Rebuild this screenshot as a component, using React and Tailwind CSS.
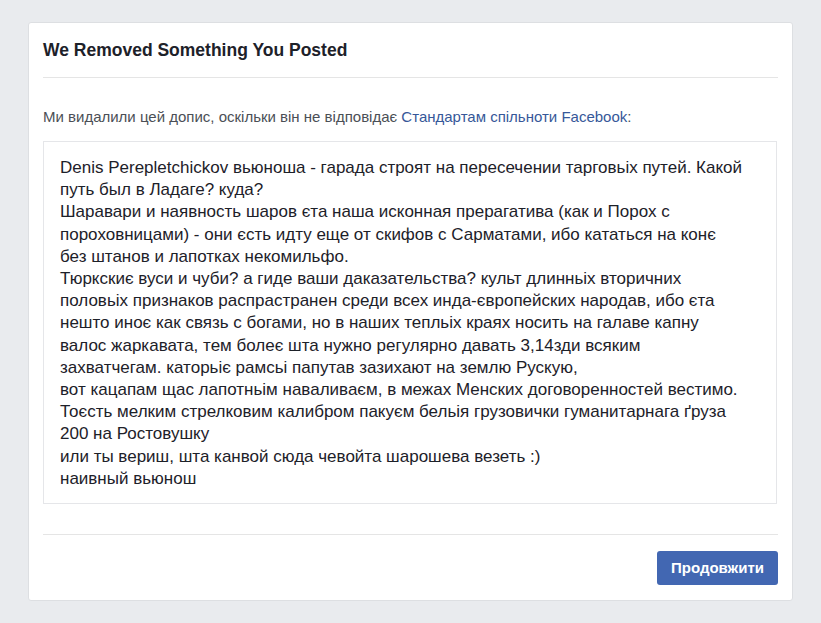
import React from "react";

const lines = [
  "Denis Perepletchickov вьюноша - гарада строят на пересечении тарговьіх путей. Какой",
  "путь был в Ладаге? куда?",
  "Шаравари и наявность шаров єта наша исконная прерагатива (как и Порох с",
  "пороховницами) - они єсть идту еще от скифов с Сарматами, ибо кататься на конє",
  "без штанов и лапотках некомильфо.",
  "Тюркскиє вуси и чуби? а гиде ваши даказательства? культ длинньіх вторичних",
  "половьіх признаков распрастранен среди всех инда-європейских народав, ибо єта",
  "нешто иноє как связь с богами, но в наших тепльіх краях носить на галаве капну",
  "валос жаркавата, тем болеє шта нужно регулярно давать 3,14зди всяким",
  "захватчегам. каторьіє рамсьі папутав зазихают на землю Рускую,",
  "вот кацапам щас лапотньім наваливаєм, в межах Менских договоренностей вестимо.",
  "Тоєсть мелким стрелковим калибром пакуєм бельія грузовички гуманитарнага ґруза",
  "200 на Ростовушку",
  "или ты вериш, шта канвой сюда чевойта шарошева везеть :)",
  "наивный вьюнош",
];

export default function App() {
  return (
    <div className="min-h-[623px] bg-[#e9ebee] pt-[22px] pl-[28px] pr-[28px] pb-[23px] font-['Liberation_Sans',Arial,sans-serif]">
      <div className="w-[765px] rounded-[3px] border border-[#dddfe2] bg-white px-[14px]">
        <div className="flex h-[55px] items-center border-b border-[#e5e5e5]">
          <h2 className="text-[17.5px] font-bold text-[#1d2129]">We Removed Something You Posted</h2>
        </div>
        <p className="pt-[30px] text-[15px] leading-[18px] text-[#4b4f56]">
          Ми видалили цей допис, оскільки він не відповідає{" "}
          <span className="text-[#365899]">Стандартам спільноти Facebook</span>:
        </p>
        <div className="mt-[15px] mb-[30px] mr-px border border-[#e5e6e9] px-[16px] pt-[15px] pb-[13px] text-[17px] leading-[22.2px] text-[#1d2129]">
          {lines.map((l, i) => (
            <div key={i} className="whitespace-nowrap">
              {l}
            </div>
          ))}
        </div>
        <div className="flex justify-end border-t border-[#e5e5e5] pt-[16px] pb-[15px]">
          <button className="h-[34px] w-[121px] rounded-[3px] bg-[#4267b2] text-[15px] font-bold text-white">
            Продовжити
          </button>
        </div>
      </div>
    </div>
  );
}
